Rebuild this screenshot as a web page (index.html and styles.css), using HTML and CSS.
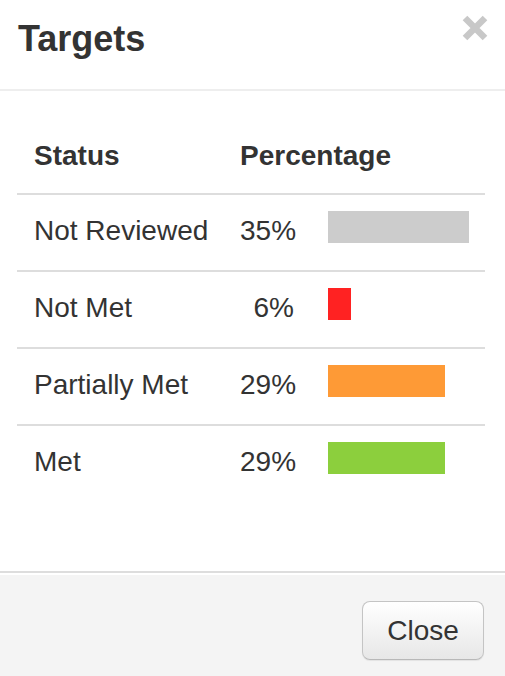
FILE: index.html
```html
<!DOCTYPE html>
<html>
<head>
<meta charset="utf-8">
<title>Targets</title>
<link rel="stylesheet" href="styles.css">
</head>
<body>
<div class="modal">
  <div class="modal-header">
    <h4 class="modal-title">Targets</h4>
    <button class="close" type="button" aria-label="Close">
      <svg width="26" height="26" viewBox="0 0 26 26"><path d="M3 3 L23 23 M23 3 L3 23" stroke="#c8c8c8" stroke-width="6.5" stroke-linecap="butt" fill="none"/></svg>
    </button>
  </div>
  <div class="modal-body">
    <table class="targets">
      <colgroup>
        <col class="c-status">
        <col class="c-num">
        <col class="c-bar">
      </colgroup>
      <thead>
        <tr><th>Status</th><th colspan="2">Percentage</th></tr>
      </thead>
      <tbody>
        <tr><td>Not Reviewed</td><td class="num">35%</td><td><div class="bar bar-grey" style="width:141px"></div></td></tr>
        <tr><td>Not Met</td><td class="num">6%</td><td><div class="bar bar-red" style="width:23px"></div></td></tr>
        <tr><td>Partially Met</td><td class="num">29%</td><td><div class="bar bar-orange" style="width:117px"></div></td></tr>
        <tr><td>Met</td><td class="num">29%</td><td><div class="bar bar-green" style="width:117px"></div></td></tr>
      </tbody>
    </table>
  </div>
  <div class="modal-footer">
    <button class="btn" type="button">Close</button>
  </div>
</div>
</body>
</html>
```
FILE: styles.css
```css
html, body {
  margin: 0;
  padding: 0;
  background: #fff;
}
body {
  font-family: "Liberation Sans", Arial, sans-serif;
  color: #333;
  font-size: 28px;
}
.modal {
  width: 505px;
}
.modal-header {
  display: flex;
  justify-content: space-between;
  align-items: flex-start;
  padding: 15px 17px 0 18px;
  height: 74px;
  border-bottom: 2px solid #eeeeee;
}
.modal-title {
  margin: 4px 0 0 0;
  font-size: 36px;
  line-height: 40px;
  font-weight: bold;
  color: #333;
}
.close {
  border: 0;
  background: none;
  padding: 0;
  margin: 0;
  width: 26px;
  height: 26px;
  display: block;
}
.close svg {
  display: block;
}
.modal-body {
  padding: 30px 20px 30px 17px;
}
.targets {
  width: 468px;
  border-collapse: collapse;
  margin-bottom: 40px;
  table-layout: fixed;
}
.c-status { width: 206px; }
.c-num { width: 88px; }
.c-bar { width: 174px; }
.targets th, .targets td {
  padding: 16px 17px 19px 17px;
  line-height: 40px;
  text-align: left;
  vertical-align: top;
  white-space: nowrap;
}
.targets th {
  font-weight: bold;
  padding-top: 15px;
  padding-bottom: 17px;
  border-bottom: 2px solid #dddddd;
}
.targets tbody tr + tr td {
  border-top: 2px solid #dddddd;
}
.targets td.num {
  text-align: right;
}
.bar {
  height: 32px;
}
.bar-grey { background: #cccccc; }
.bar-red { background: #ff2222; }
.bar-orange { background: #fe9a36; }
.bar-green { background: #8ccf3d; }
.modal-footer {
  border-top: 2px solid #dddddd;
  box-shadow: inset 0 2px 0 #ffffff;
  background: #f4f4f4;
  padding: 28px 21px 16px 0;
  display: flex;
  justify-content: flex-end;
}
.btn {
  font-family: "Liberation Sans", Arial, sans-serif;
  font-size: 28px;
  line-height: 40px;
  color: #333;
  width: 122px;
  height: 59px;
  padding: 0;
  border: 1px solid #c4c4c4;
  border-bottom-color: #b8b8b8;
  border-radius: 8px;
  background: linear-gradient(to bottom, #ffffff 0%, #e7e7e7 100%);
  box-shadow: 0 1px 1px rgba(0,0,0,0.07);
}
```
